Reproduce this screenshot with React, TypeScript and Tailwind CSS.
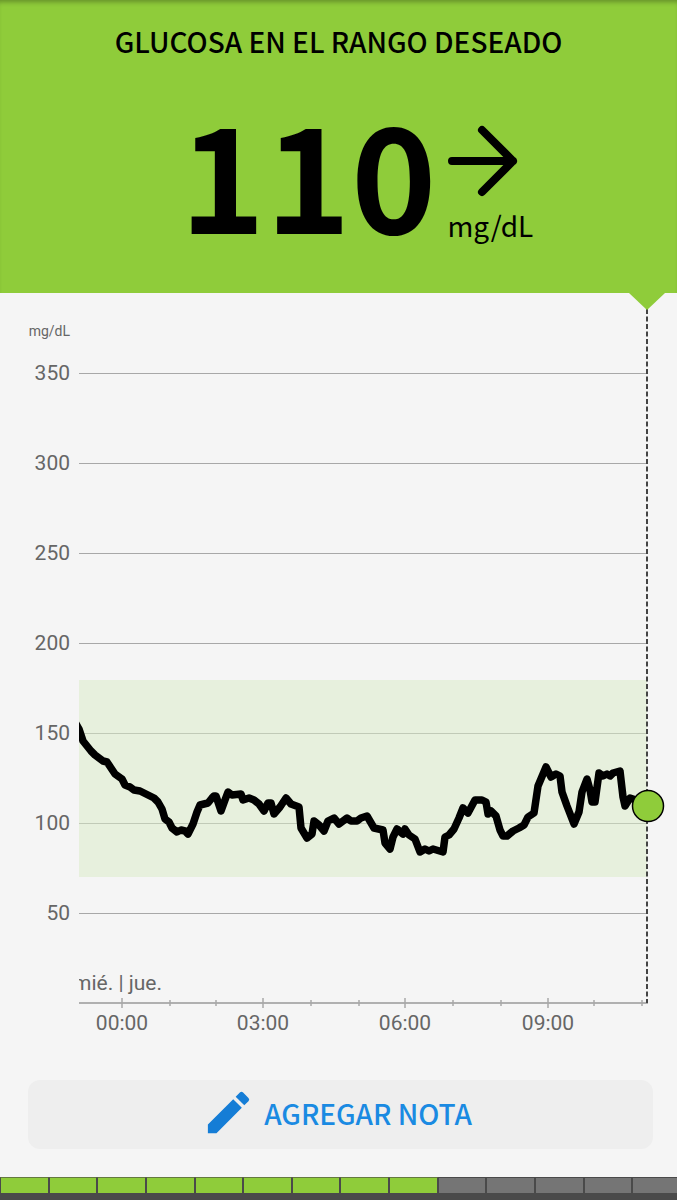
import { MdEdit } from 'react-icons/md';

const gridLevels = [350, 300, 250, 200, 150, 100, 50];

const hours = [
  { x: 122, label: '00:00' },
  { x: 170 },
  { x: 216 },
  { x: 263, label: '03:00' },
  { x: 311 },
  { x: 359 },
  { x: 405, label: '06:00' },
  { x: 453 },
  { x: 501 },
  { x: 548, label: '09:00' },
  { x: 594 },
  { x: 642 },
];

const readings =
  '75,429 79,436 83,448 87,453 91,458 95,462 99,465 103,468 107,469 111,475 115,481 122,486 125,492 130,494 134,497 140,498 148,502 154,505 158,509 162,516 165,526 169,529 172,535 177,539 181,537 185,538 188,541 193,531 197,519 200,512 208,510 212,505 214,503 216,503 221,518 225,507 228,499 232,502 241,501 243,507 249,505 254,507 259,511 264,518 268,510 271,510 274,521 280,514 286,505 291,511 299,514 301,535 307,545 312,541 314,528 319,532 324,538 328,528 334,525 339,531 347,525 351,528 357,528 361,525 367,523 374,535 383,537 385,550 390,556 393,544 397,536 403,541 405,536 409,542 415,546 420,559 425,556 429,558 433,556 443,559 445,544 449,542 454,536 459,525 463,515 468,520 475,507 482,507 486,509 488,521 491,518 496,523 500,537 503,543 507,543 513,538 519,535 524,532 528,524 534,520 538,493 546,474 551,484 556,481 560,483 562,499 567,513 574,531 579,519 582,499 587,486 590,497 592,509 595,509 599,480 603,483 607,481 610,483 613,480 620,478 623,504 625,513 630,505 636,507 648,513';

const SEGMENTS = 14;
const FILLED = 9;

const levelY = (level: number) => Math.round(710 - level * 1.8) + 0.5;

const TrendArrow = () => (
  <svg
    viewBox="0 0 72 72"
    className="size-[72px]"
    fill="none"
    stroke="black"
    strokeWidth="8"
    strokeLinecap="round"
    strokeLinejoin="round"
    aria-label="Estable"
  >
    <path d="M5 36H66M35 5L66 36L35 67" />
  </svg>
);

const Header = () => (
  <header className="bg-[#8fcc3a] pt-[23px] pb-12 text-black font-['Noto_Sans_CJK_SC',sans-serif] shadow-[inset_0_5px_5px_-3px_rgba(0,0,0,0.3)]">
    <h1 className="text-center text-[28px] leading-9 font-medium">
      GLUCOSA EN EL RANGO DESEADO
    </h1>

    <div className="mt-[52px] flex items-start justify-center gap-[11px] pl-9">
      <span className="text-[145px] leading-[120px] font-bold">110</span>
      <div className="mt-[14px] flex flex-col gap-2">
        <TrendArrow />
        <span className="text-[28px] leading-10">mg/dL</span>
      </div>
    </div>
  </header>
);

const GlucoseChart = () => (
  <svg
    viewBox="0 0 677 759"
    className="block h-auto w-full font-[Roboto,sans-serif]"
    role="img"
    aria-label="Glucosa mg/dL"
  >
    <defs>
      <clipPath id="plot">
        <rect x="79" y="0" width="598" height="759" />
      </clipPath>
    </defs>

    <text x="70" y="43" textAnchor="end" fontSize="14" fill="#666">
      mg/dL
    </text>

    {gridLevels.map((level) => (
      <g key={level}>
        <line
          x1="79"
          x2="647"
          y1={levelY(level)}
          y2={levelY(level)}
          stroke="#a8a8a8"
        />
        <text
          x="70"
          y={levelY(level) + 6}
          textAnchor="end"
          fontSize="21"
          fill="#666"
        >
          {level}
        </text>
      </g>
    ))}

    {/* Target range */}
    <rect x="79" y="387" width="568" height="197" fill="#d9ecc6" opacity="0.5" />

    {/* Time axis */}
    <line x1="79" x2="648" y1="710" y2="710" stroke="#999" strokeWidth="1.5" />
    {hours.map(({ x, label }) => (
      <g key={x}>
        <line
          x1={x}
          x2={x}
          y1={label ? 705 : 707}
          y2={label ? 715 : 713}
          stroke="#a8a8a8"
          strokeWidth="1.5"
        />
        {label && (
          <text x={x} y="737" textAnchor="middle" fontSize="21" fill="#666">
            {label}
          </text>
        )}
      </g>
    ))}

    {/* Current time */}
    <line
      x1="647"
      x2="647"
      y1="16"
      y2="710"
      stroke="#444"
      strokeWidth="2"
      strokeDasharray="5 2.5"
    />
    <path d="M629 0H665L647 17Z" fill="#8fcc3a" />

    <g clipPath="url(#plot)">
      <text x="162" y="697" textAnchor="end" fontSize="21" fill="#666">
        mié. | jue.
      </text>
      <polyline
        points={readings}
        fill="none"
        stroke="black"
        strokeWidth="7.5"
        strokeLinecap="round"
        strokeLinejoin="round"
      />
    </g>
    <circle
      cx="648"
      cy="513"
      r="15.5"
      fill="#8fcc3a"
      stroke="black"
      strokeWidth="1.5"
    />
  </svg>
);

const SensorLife = () => (
  <div className="mt-auto overflow-hidden bg-[#4a4a4a] pb-[7px]">
    <div className="-mr-1 grid grid-cols-14">
      {Array.from({ length: SEGMENTS }, (_, i) => (
        <div
          key={i}
          className={
            i < FILLED
              ? 'h-4 border-x border-t border-x-[#4a4a4a] border-t-[#64793f] bg-[#8fcc3a]'
              : 'h-4 border-x border-t border-[#4a4a4a] bg-[#757575]'
          }
        />
      ))}
    </div>
  </div>
);

const App = () => {
  return (
    <div className="flex min-h-screen flex-col bg-[#f5f5f5]">
      <Header />

      <main>
        <GlucoseChart />

        <div className="py-7 pr-6 pl-7">
          <button
            type="button"
            className="flex h-[69px] w-full items-center justify-center gap-2 rounded-xl bg-[#eeeeee] pr-2 pb-1 text-[28px] leading-9 font-medium text-[#1a8ae2] font-['Noto_Sans_CJK_SC',sans-serif]"
          >
            <MdEdit className="size-[55px] text-[#157dd6]" />
            AGREGAR NOTA
          </button>
        </div>
      </main>

      <SensorLife />
    </div>
  );
};

export default App;
